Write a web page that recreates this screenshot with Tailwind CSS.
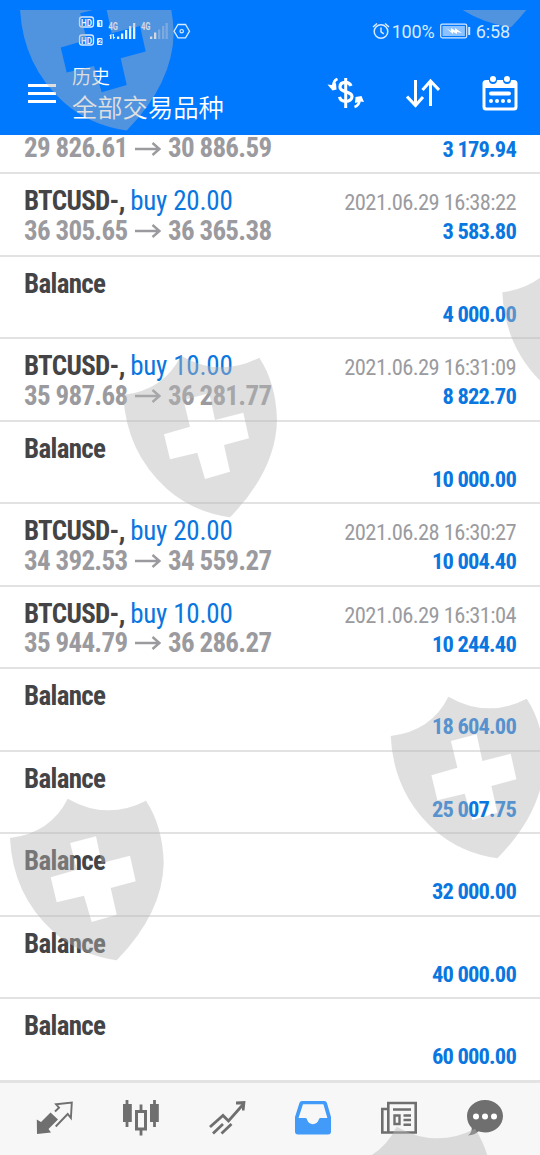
<!DOCTYPE html>
<html lang="zh">
<head>
  <meta charset="UTF-8" />
  <meta name="viewport" content="width=device-width, initial-scale=1.0" />
  <title>历史</title>
  <script src="https://cdn.jsdelivr.net/npm/@tailwindcss/browser@4"></script>
</head>
<body class="bg-white">
<div class="relative w-[540px] h-[1155px] overflow-hidden flex flex-col font-['Roboto_Condensed','Roboto','Noto_Sans_CJK_SC',sans-serif] [font-stretch:75%]">

  <!-- Header -->
  <header class="h-[135px] shrink-0 bg-[#0079ff] text-white relative z-10 font-['Roboto','Noto_Sans_CJK_SC',sans-serif] [font-stretch:100%]">
    <!-- Status bar -->
    <div class="h-[62px] pl-[78px] pr-[30px] flex items-center justify-between">
      <svg class="w-[114px] h-[40px]" viewBox="78 11 114 40" fill="none" stroke="#d8eaff" font-family="Roboto" font-weight="700">
        <rect x="79.5" y="17" width="14" height="10" rx="2.5" stroke-width="1.3" />
        <rect x="79.5" y="35" width="14" height="10" rx="2.5" stroke-width="1.3" />
        <g fill="#e6f2ff" stroke="none">
          <text x="81" y="25.6" font-size="9.5" textLength="11" lengthAdjust="spacingAndGlyphs">HD</text>
          <text x="81" y="43.6" font-size="9.5" textLength="11" lengthAdjust="spacingAndGlyphs">HD</text>
          <rect x="97" y="20" width="5.5" height="7" rx="1" />
          <rect x="97" y="38" width="5.5" height="7" rx="1" />
          <text x="108.5" y="30" font-size="10" textLength="9.5" lengthAdjust="spacingAndGlyphs">4G</text>
          <text x="141" y="30" font-size="10" textLength="9.5" lengthAdjust="spacingAndGlyphs">4G</text>
          <path d="M109 36l2.500-2.500V39h-1.500v-3zM112.500 34h1.500v3h1.500l-2.300 2.500z" />
          <path d="M117 36.5h2.300V39h-2.300zM121 33.500h2.300V39h-2.300zM125 30h2.300v9h-2.300zM129 26h2.300v13h-2.300zM133 23h2.300v16h-2.300zM150 36.500h2.300V39h-2.300zM154 32.500h2.300V39h-2.300z" />
          <path opacity=".35" d="M158 29.500h2.300V39h-2.300zM162 26h2.300v13h-2.300zM165.500 23h2.300v16h-2.300z" />
        </g>
        <g fill="#0079ff" stroke="none" font-size="7">
          <text x="97.9" y="26.1">1</text>
          <text x="97.9" y="44.1">2</text>
        </g>
        <path d="M178 24.500h7.500l4 6.700-4 6.700H178l-4-6.700z" stroke-width="1.3" />
        <circle cx="181.700" cy="31.200" r="1.700" stroke-width="1.2" />
      </svg>
      <div class="flex items-center text-[#d8eaff] text-[18px] leading-none">
        <svg class="w-[18px] h-[18px] mr-[2px]" viewBox="0 0 18 18" fill="none" stroke="currentColor" stroke-width="1.5">
          <circle cx="9" cy="9.5" r="6.8" />
          <path d="M9 5.5v4.3l2.8 2M1 5l4-3.5M17 5l-4-3.5" />
        </svg>
        <span class="w-[43px] pt-[2px] tracking-[-0.2px]">100%</span>
        <svg class="w-[31px] h-[16px] ml-[5px] mr-[5px]" viewBox="0 0 31 16" fill="none" stroke="currentColor">
          <rect x=".7" y="1.2" width="26" height="13.6" rx="1.5" stroke-width="1.2" />
          <rect x="2.5" y="3" width="22.4" height="10" fill="#8cc2ff" stroke="none" />
          <path d="M6 5l5 3V5l4 2.500V5l7 5-5-1v2l-4-2v2z" fill="#fff" stroke="none" />
          <path d="M29.2 4v8" stroke-width="2" />
        </svg>
        <span class="pt-[2px] tracking-[-0.1px]">6:58</span>
      </div>
    </div>
    <!-- Title bar -->
    <div class="h-[73px] pl-[28px] pr-[22px] flex items-center">
      <div class="w-[28px] flex flex-col gap-[5px] mt-[-11px]">
        <span class="h-[3px] bg-white"></span>
        <span class="h-[3px] bg-white"></span>
        <span class="h-[3px] bg-white"></span>
      </div>
      <div class="ml-[16px] mt-[-13px] font-['Noto_Sans_CJK_SC',sans-serif] flex-1">
        <div class="text-[19px] leading-[28px] font-[350]">历史</div>
        <div class="text-[25.3px] leading-[32px] font-[350]">全部交易品种</div>
      </div>
      <svg class="w-[38px] h-[36px] mt-[-11px] mr-[41px]" viewBox="326 75 38 36" fill="none" stroke="#fff">
        <path d="M350 86c-1-2.700-3-3.600-5.500-3.600-3.300 0-5.500 1.700-5.500 4.700 0 6.200 12 3.400 12 9.500 0 3-2.500 4.700-6 4.700-3.200 0-5.700-1-6.500-4.400" stroke-width="3.2" />
        <path d="M344.700 78v30" stroke-width="3" />
        <path d="M336.500 79c-3 1-4 3.500-4.200 7" stroke-width="2.8" />
        <path d="M326.500 84.500l4 .5 4.500-2 .5 6.500-4 1z" fill="#fff" stroke="none" />
        <path d="M353.500 107c3-1 4.800-3.500 5-7" stroke-width="2.8" />
        <path d="M354.500 97l6-1 2.500 6-3.500-.5-5.500 1.500z" fill="#fff" stroke="none" />
      </svg>
      <svg class="w-[34px] h-[30px] mt-[-11px] mr-[42px]" viewBox="406 78 34 30" fill="none" stroke="#fff" stroke-width="3">
        <path d="M415.500 80v25M407 96.500l8.500 9 7.500-8.500M430.500 106V81M422.500 90l8-9 8.500 9" />
      </svg>
      <svg class="w-[36px] h-[36px] mt-[-11px]" viewBox="482 74 36 36" fill="#fff">
        <path fill-rule="evenodd" d="M486 79h3a4 4 0 0 0 8 0h6a4 4 0 0 0 8 0h3a3.500 3.500 0 0 1 3.500 3.500V106a3.500 3.500 0 0 1-3.500 3.500h-28a3.500 3.500 0 0 1-3.500-3.500V82.500A3.500 3.500 0 0 1 486 79zm-.5 8v18.500a1 1 0 0 0 1 1h27a1 1 0 0 0 1-1V87z" />
        <circle cx="493" cy="78" r="3" /><circle cx="507" cy="78" r="3" />
        <rect x="489" y="90.500" width="22" height="4" rx="2" />
        <circle cx="491" cy="100" r="2" /><circle cx="497" cy="100" r="2" /><circle cx="503" cy="100" r="2" /><circle cx="509" cy="100" r="2" />
      </svg>
    </div>
  </header>

  <!-- History list -->
  <main class="flex-1 min-h-0 overflow-hidden">
    <!-- row scrolled half way under the header -->
    <div class="h-[39px] border-b-2 border-[#e2e2e2] px-6 flex justify-between whitespace-nowrap font-bold">
      <div class="text-[27px] leading-[27px] text-[#9b9b9f] flex items-center h-[27px] tracking-[-0.68px]">29 826.61<svg class="w-[26px] h-[14px] ml-[7.5px] mr-[7px]" viewBox="0 0 26 14" fill="none" stroke="currentColor" stroke-width="2.4"><path d="M0 7h24.500M17.500 1l7 6-7 6" /></svg>30 886.59</div>
      <div class="text-[22.5px] leading-[28px] text-[#0a76e0] tracking-[-0.8px]">3 179.94</div>
    </div>
    <div id="history"></div>
  </main>

  <!-- Bottom navigation -->
  <nav class="h-[75px] shrink-0 bg-[#f7f7f7] border-t-[3px] border-[#e3e3e3] text-[#6f6f6f]">
    <svg class="w-[540px] h-[72px]" viewBox="0 1083 540 72" fill="none" stroke="currentColor">
      <!-- quotes -->
      <path d="M36.800 1119.500l4.200 2.500 9.500-9.500 7.500 7-9.500 9.500 2.500 3.500-14 1.500z" fill="currentColor" stroke="none" />
      <path d="M55 1111.500l4-3.800-3-3.500 15.800-1.700-.9 15.500-3.200-4-12 12.500" stroke-width="1.9" />
      <!-- charts -->
      <path d="M127 1100v27M154.500 1100v27M141 1104.500v6M141 1130v5.500" stroke-width="2.8" />
      <path d="M123 1104h8.800v18H123zM150 1104h8.800v18H150z" fill="currentColor" stroke="none" />
      <path d="M136.500 1111.500h9v17.500h-9z" stroke-width="3" />
      <!-- trade -->
      <path d="M210 1127l13-11.500 5.500 5.500 15-17M213 1133.500l10-9.500M221.500 1133.500l10-9.500" stroke-width="2.8" />
      <path d="M236 1101.500l9.500-.5-1 9.500h-2.500v-6h-6z" fill="currentColor" stroke="none" />
      <!-- history -->
      <path fill="#429bf8" stroke="none" fill-rule="evenodd" d="M302 1101h22.500q1.800 0 2.400 1.800L331 1117v14.500q0 3-3 3h-30q-3 0-3-3V1117l4.500-14.200q.6-1.800 2.500-1.800zm1 3.200l-4.500 13.800h7q1.500 0 1.700 2a6 6 0 0 0 11.400 0q.3-2 1.800-2h7l-4-13.800z" />
      <!-- news -->
      <path d="M388.300 1103h27.400v29.500h-27.400zM388.300 1109h-6v23.500h6M393 1109.500h18M403.500 1115.500h7.500M403.500 1120h7.500M403.500 1124.700h7.500" stroke-width="2.6" />
      <path d="M394.500 1115.500h5v8.500h-5z" stroke-width="2.4" />
      <!-- messages -->
      <path d="M485 1100c10 0 18 7 18 16s-8 16.500-18 16.500c-2.500 0-4.500-.5-6.500-1.200-2.500 2.500-6 4-10.500 4.200 2.500-2 3.800-4.500 3.800-7.500-3-3-4.800-7-4.800-12 0-9 8-16 18-16z" fill="currentColor" stroke="none" />
      <g fill="#fff" stroke="none"><circle cx="476" cy="1116.500" r="3" /><circle cx="485" cy="1116.500" r="3" /><circle cx="494" cy="1116.500" r="3" /></g>
    </svg>
  </nav>

  <!-- Shield watermark -->
  <div class="absolute left-0 top-[10px] w-[540px] h-[1145px] z-20 pointer-events-none">
    <svg class="w-full h-full" viewBox="0 10 540 1145" fill="#b6b6b6" fill-opacity=".44">
      <defs>
        <path id="shield" fill-rule="evenodd" d="M123.300 395Q164 390 181 355.700Q220 378 259.300 357.700Q276 383 277 420Q276 470 230 517.300Q193 512 167 489Q126 452 123.300 395zM183.500 400L190 426.700L164 434.300L170 459.300L197.300 452.700L205 479L230 471.700L224 445L249 438.300L243.300 412.700L215 420L209.300 393.300z" />
      </defs>
      <use href="#shield" x="-103.3" y="-386.7" />
      <use href="#shield" x="281" y="-490" />
      <use href="#shield" x="379" y="-102.7" />
      <use href="#shield" />
      <use href="#shield" x="267.4" y="341" />
      <use href="#shield" x="-113.3" y="443" />
      <use href="#shield" x="215.7" y="771" />
    </svg>
  </div>
</div>

<script>
  const rows = [
    { volume: '20.00', from: '36 305.65', to: '36 365.38', time: '2021.06.29 16:38:22', amount: '3 583.80' },
    { amount: '4 000.00' },
    { volume: '10.00', from: '35 987.68', to: '36 281.77', time: '2021.06.29 16:31:09', amount: '8 822.70' },
    { amount: '10 000.00' },
    { volume: '20.00', from: '34 392.53', to: '34 559.27', time: '2021.06.28 16:30:27', amount: '10 004.40' },
    { volume: '10.00', from: '35 944.79', to: '36 286.27', time: '2021.06.29 16:31:04', amount: '10 244.40' },
    { amount: '18 604.00' },
    { amount: '25 007.75' },
    { amount: '32 000.00' },
    { amount: '40 000.00' },
    { amount: '60 000.00' },
  ];

  const arrow = '<svg class="w-[26px] h-[14px] ml-[7.5px] mr-[7px]" viewBox="0 0 26 14" fill="none" stroke="currentColor" stroke-width="2.4"><path d="M0 7h24.500M17.500 1l7 6-7 6" /></svg>';

  document.getElementById('history').innerHTML = rows.map(r => `
    <div class="h-[82.5px] border-b-2 border-[#e2e2e2] px-6 pt-[12px] flex justify-between whitespace-nowrap">
      <div class="text-[27px] leading-[30px] font-bold tracking-[-0.68px]">
        <div class="text-[#444446]">${r.time ? `BTCUSD-, <span class="font-normal text-[#0a76e0] tracking-[-0.2px]">buy ${r.volume}</span>` : 'Balance'}</div>
        ${r.time ? `<div class="text-[#9b9b9f] flex items-center h-[29px]">${r.from}${arrow}${r.to}</div>` : ''}
      </div>
      <div class="text-right text-[22.5px] leading-[30px] pt-[1px] tracking-[-0.6px]">
        <div class="h-[29px] text-[#9b9b9f]">${r.time || ''}</div>
        <div class="font-bold text-[#0a76e0] tracking-[-0.8px]">${r.amount}</div>
      </div>
    </div>`).join('');
</script>
</body>
</html>
